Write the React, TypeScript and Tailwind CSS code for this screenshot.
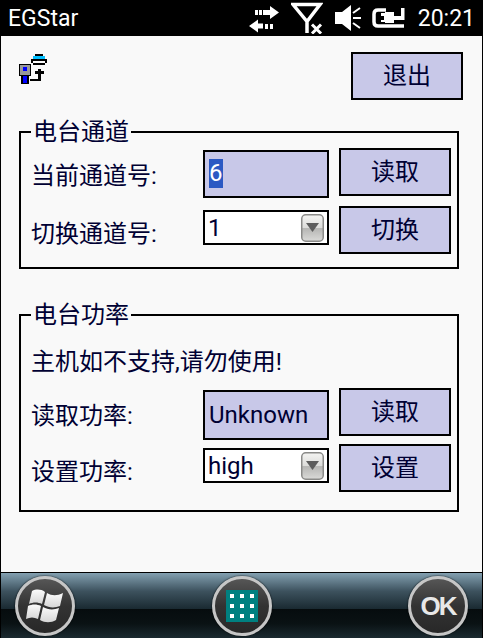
import React from "react";

const FF = "font-['Roboto','Noto_Sans_CJK_SC',sans-serif]";

function Btn({ children, className = "" }: { children: React.ReactNode; className?: string }) {
  return (
    <button className={`w-[112px] h-[48px] shrink-0 border-2 border-black bg-[#c8c8e8] text-[#000033] text-[24px] leading-none flex items-center justify-center ${className}`}>
      {children}
    </button>
  );
}

function Sel({ value }: { value: string }) {
  return (
    <div className="w-[126px] h-[35px] shrink-0 mt-[4px] border-2 border-black bg-white flex items-center justify-between pl-[3px] pr-[3px] text-[24px] text-[#000033]">
      <span className="leading-none">{value}</span>
      <svg width="23" height="28" viewBox="0 0 23 28" className="shrink-0">
        <defs>
          <linearGradient id="sg" x1="0" y1="0" x2="0" y2="1">
            <stop offset="0" stopColor="#f4f4f2" />
            <stop offset="0.5" stopColor="#dcdcda" />
            <stop offset="0.52" stopColor="#b6b6b4" />
            <stop offset="1" stopColor="#dadad8" />
          </linearGradient>
        </defs>
        <rect x="0.75" y="0.75" width="21.5" height="26.5" rx="4" fill="url(#sg)" stroke="#8a8a88" strokeWidth="1.5" />
        <path d="M5 9h13l-6.5 9z" fill="#5c5c5c" />
      </svg>
    </div>
  );
}

function Group({ title, children, className = "" }: { title: string; children: React.ReactNode; className?: string }) {
  return (
    <fieldset className={`w-[440px] border-2 border-black ml-[18px] pl-[10px] ${className}`}>
      <legend className="px-[2px] text-[24px] leading-[26px] text-[#000033]">{title}</legend>
      {children}
    </fieldset>
  );
}

function Row({ label, children, className = "" }: { label: string; children: React.ReactNode; className?: string }) {
  return (
    <div className={`flex items-start ${className}`}>
      <span className="w-[172px] h-[48px] shrink-0 text-[24px] leading-[57px] text-[#000033] whitespace-nowrap">{label}</span>
      {children}
    </div>
  );
}

function Ring({ children }: { children: React.ReactNode }) {
  return (
    <div className="w-[60px] h-[60px] rounded-full border-[3px] border-[#c6c6c6] bg-gradient-to-b from-[#565656] via-[#333333] to-[#282828] flex items-center justify-center shadow-[0_0_2px_#000]">
      {children}
    </div>
  );
}

function Dots() {
  const cells = [0, 1, 2, 3, 4, 5, 6, 7, 8];
  return (
    <div className="w-[32px] h-[32px] shrink-0 bg-[#008080] grid grid-cols-3 gap-[6px] p-[4px]">
      {cells.map((c) => (
        <span key={c} className="bg-white w-[4px] h-[4px]" />
      ))}
    </div>
  );
}

export default function App() {
  return (
    <div className={`w-[483px] h-[638px] flex flex-col overflow-hidden bg-black border-x border-black ${FF}`}>
      {/* status bar */}
      <div className="h-[36px] shrink-0 bg-black text-white flex items-center pl-[7px] pr-[7px]">
        <span className="text-[23px] leading-none">EGStar</span>
        <div className="ml-auto flex items-center">
          <svg width="31" height="30" viewBox="0 0 31 30" fill="#fff" className="mr-[11px]">
            <path d="M6 6h3v5H6zM10 6h3v5h-3zM14 6h7V2l9 6.5-9 6.5v-4h-7z" transform="translate(0 1)" />
            <path d="M0 23l9-6.500v4h5v5H9v4zM16 21h3v5h-3zM21 21h3v5h-3z" />
          </svg>
          <svg width="32" height="32" viewBox="0 0 32 32" className="mr-[12px]">
            <path d="M2 2.500H29L16 19.500zM16 19v12" fill="none" stroke="#fff" strokeWidth="3.500" strokeLinejoin="miter" />
            <path d="M21 22.500l9 9M30 22.500l-9 9" stroke="#fff" strokeWidth="3" />
          </svg>
          <svg width="27" height="26" viewBox="0 0 27 26" fill="#fff" className="mr-[10px]">
            <path d="M0 7h7L16 0v26l-9-7H0z" />
            <path d="M18 8l7-5M18 13h8M18 18l7 5" stroke="#fff" strokeWidth="2" fill="none" />
          </svg>
          <svg width="33" height="22" viewBox="0 0 33 22" className="mr-[13px]">
            <path d="M14 3H6Q2 3 2 7V15Q2 19 6 19H32" fill="none" stroke="#fff" strokeWidth="3.500" />
            <path d="M9 6h4V5h9v11h-9v-1H9v-2h3v-4H9z" fill="#fff" />
            <path d="M22 9h7V1h3.500v12H22z" fill="#fff" />
          </svg>
          <span className="text-[23px] leading-none">20:21</span>
        </div>
      </div>

      {/* content */}
      <div className="h-[537px] shrink-0 bg-[#f9f9f9] border-b border-black flex flex-col">
        <div className="flex items-start justify-between h-[90px] pt-[16px] pl-[18px] pr-[19px]">
          <svg width="32" height="32" viewBox="0 0 32 32" shapeRendering="crispEdges" className="mt-[2px]">
            <rect x="0" y="10" width="12" height="12" fill="#000" />
            <rect x="1" y="11" width="10" height="10" fill="#9a9a9a" />
            <rect x="4" y="13" width="4" height="4" fill="#0000ff" />
            <rect x="2" y="22" width="8" height="8" fill="#000" />
            <rect x="4" y="22" width="4" height="7" fill="#0000ff" />
            <rect x="16" y="0" width="8" height="2" fill="#000" />
            <rect x="14" y="2" width="12" height="3" fill="#00bfff" />
            <rect x="12" y="5" width="16" height="2" fill="#000" />
            <rect x="12" y="7" width="2" height="2" fill="#000" />
            <rect x="26" y="7" width="2" height="2" fill="#000" />
            <rect x="14" y="9" width="12" height="2" fill="#000" />
            <rect x="19" y="15" width="3" height="11" fill="#000" />
            <rect x="16" y="17" width="9" height="3" fill="#000" />
            <rect x="11" y="25" width="11" height="2" fill="#000" />
          </svg>
          <Btn>退出</Btn>
        </div>

        <Group title="电台通道" className="h-[150px] mt-[-7px]">
          <Row label="当前通道号:" className="mt-[3px]">
            <div className="w-[126px] h-[48px] mt-[2px] shrink-0 border-2 border-black bg-[#c8c8e8] pl-[4px] pt-[7px] text-[24px] leading-[29px] text-white">
              <span className="bg-[#2b59c3] inline-block">6</span>
            </div>
            <Btn className="ml-[10px]">读取</Btn>
          </Row>
          <Row label="切换通道号:" className="mt-[8px]">
            <Sel value="1" />
            <Btn className="ml-[10px]">切换</Btn>
          </Row>
        </Group>

        <Group title="电台功率" className="h-[210px] mt-[33px]">
          <div className="text-[24px] leading-[30px] mt-[19px] text-[#000033]">主机如不支持,请勿使用!</div>
          <Row label="读取功率:" className="mt-[11px]">
            <div className="w-[126px] h-[50px] mt-[2px] shrink-0 border-2 border-black bg-[#c8c8e8] pl-[4px] flex items-center text-[24px] text-[#000033]">
              Unknown
            </div>
            <Btn className="ml-[10px]">读取</Btn>
          </Row>
          <Row label="设置功率:" className="mt-[4px]">
            <Sel value="high" />
            <Btn className="ml-[10px]">设置</Btn>
          </Row>
        </Group>
      </div>

      {/* bottom bar */}
      <div className="h-[65px] shrink-0 bg-[linear-gradient(to_bottom,#83a0b0_0%,#3d525e_28%,#1a2a32_55%,#060c0e_56%,#0a1214_78%,#1b2a30_100%)] flex items-center justify-between px-[14px]">
        <Ring>
          <svg width="38" height="36" viewBox="0 0 38 36" className="shrink-0">
            <defs>
              <linearGradient id="w" x1="0" y1="0" x2="0" y2="1">
                <stop offset="0" stopColor="#fbfbfb" />
                <stop offset="1" stopColor="#d6d6d6" />
              </linearGradient>
            </defs>
            <path d="M6 3C10 1 15 1 19 4l-3 12C12 14 7 14 3 16z" fill="url(#w)" />
            <path d="M21 5c5 3 10 3 16 0l-3 13c-5 2-11 2-16-1z" fill="url(#w)" />
            <path d="M2 18c4-2 9-2 13 0l-3 13C8 29 4 29 0 31z" fill="url(#w)" />
            <path d="M17 19c5 3 11 3 16 1l-3 12c-5 3-11 3-16 0z" fill="url(#w)" />
          </svg>
        </Ring>
        <Ring>
          <Dots />
        </Ring>
        <Ring>
          <span className="font-['Liberation_Sans',sans-serif] font-bold text-[26px] leading-none text-[#e8e8e8] tracking-[-2px]">OK</span>
        </Ring>
      </div>
    </div>
  );
}
